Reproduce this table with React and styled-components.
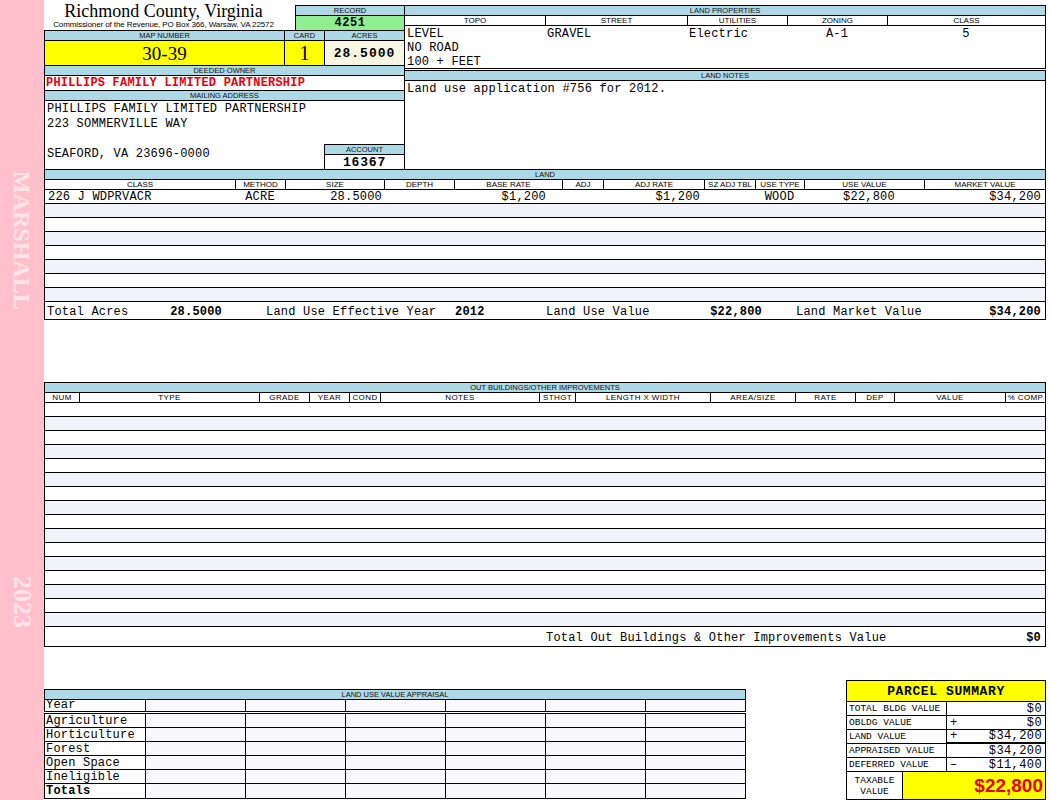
import React from "react";
import styled, { createGlobalStyle } from "styled-components";

const MONO = `"Liberation Mono", "DejaVu Sans Mono", monospace`;
const SANS = `"Liberation Sans", Arial, sans-serif`;
const SERIF = `"Liberation Serif", "Times New Roman", serif`;

const LAND_COLS = "190px 50px 99px 70px 108px 41px 101px 51px 49px 120px 1fr";
const OB_COLS = "34px 180px 50px 40px 31px 159px 36px 135px 85px 60px 39px 111px 1fr";
const PROP_COLS = "140px 142px 100px 100px 1fr";
const LUV_COLS = "100px repeat(6, 1fr)";

const GlobalStyle = createGlobalStyle`
    html, body {
        margin: 0;
        padding: 0;
        background: #fff;
    }
    body {
        width: 1050px;
        height: 800px;
        overflow: hidden;
    }
    * {
        box-sizing: border-box;
    }
`;

const Page = styled.div`
    display: flex;
    width: 1050px;
    height: 800px;
    overflow: hidden;
`;

const Strip = styled.aside`
    width: 44px;
    flex: none;
    background: #ffc0cb;
    display: flex;
    flex-direction: column;
    align-items: center;
    justify-content: space-between;
    padding: 171px 0 172px;
`;

const StripText = styled.div`
    writing-mode: vertical-rl;
    font-family: ${SERIF};
    font-weight: bold;
    font-size: ${p => p.$size}px;
    line-height: 1;
    color: rgba(255, 255, 255, 0.6);
`;

const Main = styled.main`
    width: 1002px;
    flex: none;
    display: flex;
    flex-direction: column;
`;

const Head = styled.div`
    display: flex;
    height: 171px;
`;

const LeftHead = styled.div`
    width: 361px;
    flex: none;
    display: flex;
    flex-direction: column;
`;

const RightHead = styled.div`
    flex: 1;
    margin-left: -1px;
    display: flex;
    flex-direction: column;
`;

const TitleRow = styled.div`
    display: flex;
    height: 31px;
`;

const TitleBlock = styled.div`
    flex: 1;
    text-align: center;
    padding: 2px 12px 0 0;
`;

const Title = styled.div`
    font-family: ${SERIF};
    font-size: 18px;
    line-height: 18px;
`;

const Subtitle = styled.div`
    font-family: ${SANS};
    font-size: 8px;
    line-height: 9px;
    letter-spacing: -0.1px;
`;

const Field = styled.div`
    border: 1px solid #000;
    background: #fff;
    display: flex;
    flex-direction: column;
    width: ${p => (p.$w ? `${p.$w}px` : "auto")};
    flex: ${p => (p.$fill ? 1 : "none")};
    margin-left: ${p => (p.$joined ? "-1px" : 0)};
    margin-top: ${p => p.$top || 0}px;
`;

const Cap = styled.div`
    height: 10px;
    line-height: 9px;
    background: #add8e6;
    border-bottom: 1px solid #000;
    font-family: ${SANS};
    font-size: 7.5px;
    text-align: center;
    text-transform: uppercase;
    color: #111;
    white-space: nowrap;
`;

const RecordValue = styled.div`
    height: 14px;
    line-height: 14px;
    background: #90ee90;
    font-family: ${MONO};
    font-weight: bold;
    font-size: 12px;
    letter-spacing: 0.5px;
    text-align: center;
`;

const MapRow = styled.div`
    display: flex;
    margin-top: -1px;
`;

const BigValue = styled.div`
    height: 24px;
    line-height: 25px;
    background: ${p => p.$bg};
    font-family: ${p => (p.$mono ? MONO : SERIF)};
    font-weight: ${p => (p.$mono ? "bold" : "normal")};
    font-size: ${p => p.$size}px;
    letter-spacing: ${p => (p.$mono ? "1px" : "0")};
    text-align: center;
`;

const OwnerValue = styled.div`
    height: 14px;
    line-height: 15px;
    padding-left: 1px;
    font-family: ${MONO};
    font-weight: bold;
    font-size: 12px;
    letter-spacing: 0.2px;
    color: #e8000b;
    white-space: nowrap;
`;

const MailBody = styled.div`
    flex: 1;
    display: flex;
    align-items: flex-end;
`;

const Address = styled.div`
    flex: 1;
    align-self: stretch;
    padding: 1px 2px;
    font-family: ${MONO};
    font-size: 12px;
    line-height: 15px;
    letter-spacing: 0.2px;
    white-space: pre;
`;

const AccountField = styled(Field)`
    margin: 0 -1px -1px 0;
`;

const AccountValue = styled.div`
    height: 14px;
    line-height: 15px;
    font-family: ${MONO};
    font-weight: bold;
    font-size: 13px;
    letter-spacing: 0.8px;
    text-align: center;
`;

const Row = styled.div`
    display: grid;
    grid-template-columns: ${p => p.$cols};
    height: ${p => p.$h || 14}px;
    border-bottom: ${p => (p.$last ? "0" : "1px solid #000")};
    background: ${p => (p.$alt ? "#f2f2fa" : "#fff")};
`;

const HeadCell = styled.div`
    font-family: ${SANS};
    font-size: 8px;
    line-height: 9px;
    letter-spacing: ${p => p.$spread || 0}px;
    text-align: center;
    text-transform: uppercase;
    white-space: nowrap;
    overflow: hidden;
    border-left: 1px solid #000;

    &:first-child {
        border-left: 0;
    }
`;

const Cell = styled.div`
    font-family: ${MONO};
    font-size: 12px;
    line-height: 13px;
    letter-spacing: 0.2px;
    white-space: pre;
    overflow: hidden;
    text-align: ${p => p.$align || "left"};
    padding: 1px ${p => p.$pr ?? 2}px 0 ${p => p.$pl ?? 2}px;
    font-weight: ${p => (p.$bold ? "bold" : "normal")};
`;

const PropValues = styled.div`
    display: grid;
    grid-template-columns: ${PROP_COLS};
    height: 42px;
    font-family: ${MONO};
    font-size: 12px;
    line-height: 14px;
    letter-spacing: 0.2px;
`;

const PropCol = styled.div`
    padding: 1px 0 0 ${p => (p.$center ? 0 : 2)}px;
    text-align: ${p => (p.$center ? "center" : "left")};
    white-space: pre;
`;

const NoteBody = styled.div`
    flex: 1;
    padding: 1px 2px 0;
    font-family: ${MONO};
    font-size: 12px;
    line-height: 14px;
    letter-spacing: 0.2px;
`;

const TotalRow = styled.div`
    display: grid;
    grid-template-columns: ${p => p.$cols};
    height: ${p => p.$h}px;
    line-height: ${p => p.$h}px;
    padding-top: 2px;
    background: #fff;
    font-family: ${MONO};
    font-size: 12px;
    letter-spacing: 0.2px;
    white-space: pre;
`;

const TotalText = styled.span`
    text-align: ${p => p.$align || "left"};
    padding: 0 ${p => p.$pr || 0}px 0 ${p => p.$pl || 0}px;
    font-weight: ${p => (p.$bold ? "bold" : "normal")};
`;

const Bottom = styled.div`
    display: flex;
    justify-content: space-between;
    align-items: flex-start;
    margin-top: 33px;
`;

const Luv = styled.div`
    width: 702px;
    margin-top: 9px;
    display: flex;
    flex-direction: column;
`;

const LuvCap = styled(Cap)`
    height: 11px;
    border: 1px solid #000;
`;

const LuvTable = styled.div`
    border: 1px solid #000;
    margin-top: ${p => p.$gap}px;
`;

const LuvCell = styled.div`
    border-left: 1px solid #000;
    background: #f8f8fd;
    font-family: ${MONO};
    font-size: 12px;
    line-height: ${p => p.$lh || 13}px;
    padding-top: ${p => (p.$lh ? 0 : 1)}px;
    letter-spacing: 0.2px;
    font-weight: ${p => (p.$bold ? "bold" : "normal")};
    padding-left: 1px;
    white-space: nowrap;
    overflow: ${p => (p.$lh ? "visible" : "hidden")};

    &:first-child {
        border-left: 0;
        background: #fff;
    }
`;

const Summary = styled(Field)`
    width: 200px;
`;

const SummaryHead = styled.div`
    height: 21px;
    line-height: 21px;
    background: #ffff00;
    border-bottom: 1px solid #000;
    font-family: ${MONO};
    font-weight: bold;
    font-size: 13px;
    letter-spacing: 0.6px;
    text-align: center;
`;

const SumRow = styled.div`
    display: grid;
    grid-template-columns: ${p => p.$cols || "100px 1fr"};
    height: ${p => p.$h || 14}px;
    border-bottom: ${p => (p.$last ? "0" : "1px solid #000")};
`;

const SumLabel = styled.div`
    border-right: 1px solid #000;
    font-family: ${MONO};
    font-size: 9.5px;
    line-height: ${p => p.$lh || 14}px;
    padding: ${p => (p.$center ? "3px 0 0" : "0 0 0 2px")};
    text-align: ${p => (p.$center ? "center" : "left")};
    white-space: pre;
`;

const SumValue = styled.div`
    display: flex;
    justify-content: space-between;
    padding: 0 3px;
    font-family: ${MONO};
    font-size: 12px;
    line-height: ${p => (p.$thick ? 12 : 14)}px;
    letter-spacing: 0.4px;
    box-shadow: ${p => (p.$thick ? "inset 0 -2px 0 #000" : "none")};
`;

const TaxValue = styled.div`
    background: #ffff00;
    color: #e8000b;
    font-family: ${SANS};
    font-weight: bold;
    font-size: 19px;
    line-height: 27px;
    text-align: right;
    padding-right: 2px;
`;

const landHeads = ["Class", "Method", "Size", "Depth", "Base Rate", "Adj", "Adj Rate", "SZ Adj Tbl", "Use Type", "Use Value", "Market Value"];
const obHeads = ["Num", "Type", "Grade", "Year", "Cond", "Notes", "Sthgt", "Length X Width", "Area/Size", "Rate", "Dep", "Value", "% Comp"];
const luvLabels = ["Agriculture", "Horticulture", "Forest", "Open Space", "Ineligible", "Totals"];

const summaryRows = [
    { label: "TOTAL BLDG VALUE", sign: "", value: "$0" },
    { label: "OBLDG VALUE", sign: "+", value: "$0" },
    { label: "LAND VALUE", sign: "+", value: "$34,200", thick: true },
    { label: "APPRAISED VALUE", sign: "", value: "$34,200" },
    { label: "DEFERRED VALUE", sign: "\u2013", value: "$11,400" }
];

function LandSection() {
    return (
        <Field $top={-1}>
            <Cap>Land</Cap>
            <Row $cols={LAND_COLS} $h={10}>
                {landHeads.map(h => <HeadCell key={h}>{h}</HeadCell>)}
            </Row>
            <Row $cols={LAND_COLS}>
                <Cell $pl={3}>{"226 J WDPRVACR"}</Cell>
                <Cell $align="center">ACRE</Cell>
                <Cell $align="right">28.5000</Cell>
                <Cell />
                <Cell $align="right" $pr={16}>$1,200</Cell>
                <Cell />
                <Cell $align="right" $pr={4}>$1,200</Cell>
                <Cell />
                <Cell $align="center">WOOD</Cell>
                <Cell $align="center" $pl={12}>$22,800</Cell>
                <Cell $align="right" $pr={4}>$34,200</Cell>
            </Row>
            {Array.from({ length: 7 }, (_, i) => (
                <Row key={i} $cols={LAND_COLS} $alt={i % 2 === 0} />
            ))}
            <TotalRow $cols="117px 60px 230px 48px 200px 64px 196px 1fr" $h={17}>
                <TotalText $pl={2}>Total Acres</TotalText>
                <TotalText $align="right" $bold>28.5000</TotalText>
                <TotalText $pl={44}>Land Use Effective Year</TotalText>
                <TotalText $pl={3} $bold>2012</TotalText>
                <TotalText $pl={46}>Land Use Value</TotalText>
                <TotalText $align="right" $pr={2} $bold>$22,800</TotalText>
                <TotalText $pl={32}>Land Market Value</TotalText>
                <TotalText $align="right" $pr={4} $bold>$34,200</TotalText>
            </TotalRow>
        </Field>
    );
}

function OutBuildings() {
    return (
        <Field $top={62}>
            <Cap>Out Buildings/Other Improvements</Cap>
            <Row $cols={OB_COLS} $h={10}>
                {obHeads.map(h => <HeadCell key={h} $spread={0.4}>{h}</HeadCell>)}
            </Row>
            {Array.from({ length: 16 }, (_, i) => (
                <Row key={i} $cols={OB_COLS} $alt={i % 2 === 1} />
            ))}
            <TotalRow $cols="1fr auto" $h={19}>
                <TotalText $pl={501}>Total Out Buildings &amp; Other Improvements Value</TotalText>
                <TotalText $pr={4} $bold>$0</TotalText>
            </TotalRow>
        </Field>
    );
}

function LandUseAppraisal() {
    return (
        <Luv>
            <LuvCap>Land Use Value Appraisal</LuvCap>
            <LuvTable $gap={-1}>
                <Row $cols={LUV_COLS} $h={11} $last>
                    <LuvCell $lh={11}>Year</LuvCell>
                    {Array.from({ length: 6 }, (_, i) => <LuvCell key={i} $lh={11} />)}
                </Row>
            </LuvTable>
            <LuvTable $gap={1}>
                {luvLabels.map((label, r) => (
                    <Row key={label} $cols={LUV_COLS} $last={r === luvLabels.length - 1}>
                        <LuvCell $bold={label === "Totals"}>{label}</LuvCell>
                        {Array.from({ length: 6 }, (_, i) => <LuvCell key={i} />)}
                    </Row>
                ))}
            </LuvTable>
        </Luv>
    );
}

function ParcelSummary() {
    return (
        <Summary>
            <SummaryHead>PARCEL SUMMARY</SummaryHead>
            {summaryRows.map(r => (
                <SumRow key={r.label}>
                    <SumLabel>{r.label}</SumLabel>
                    <SumValue $thick={r.thick}>
                        <span>{r.sign}</span>
                        <span>{r.value}</span>
                    </SumValue>
                </SumRow>
            ))}
            <SumRow $cols="56px 1fr" $h={27} $last>
                <SumLabel $center $lh={11}>{"TAXABLE\nVALUE"}</SumLabel>
                <TaxValue>$22,800</TaxValue>
            </SumRow>
        </Summary>
    );
}

export default function App() {
    return (
        <Page>
            <GlobalStyle />
            <Strip>
                <StripText $size={24}>MARSHALL</StripText>
                <StripText $size={26}>2023</StripText>
            </Strip>
            <Main>
                <Head>
                    <LeftHead>
                        <TitleRow>
                            <TitleBlock>
                                <Title>Richmond County, Virginia</Title>
                                <Subtitle>Commissioner of the Revenue, PO Box 366, Warsaw, VA 22572</Subtitle>
                            </TitleBlock>
                            <Field $w={110} $top={5}>
                                <Cap>Record</Cap>
                                <RecordValue>4251</RecordValue>
                            </Field>
                        </TitleRow>
                        <MapRow>
                            <Field $fill>
                                <Cap>Map Number</Cap>
                                <BigValue $bg="#ffff00" $size={19}>30-39</BigValue>
                            </Field>
                            <Field $w={41} $joined>
                                <Cap>Card</Cap>
                                <BigValue $bg="#ffff00" $size={21}>1</BigValue>
                            </Field>
                            <Field $w={81} $joined>
                                <Cap>Acres</Cap>
                                <BigValue $bg="#f7f5e4" $size={13} $mono>28.5000</BigValue>
                            </Field>
                        </MapRow>
                        <Field $top={-1}>
                            <Cap>Deeded Owner</Cap>
                            <OwnerValue>PHILLIPS FAMILY LIMITED PARTNERSHIP</OwnerValue>
                        </Field>
                        <Field $top={-1} $fill>
                            <Cap>Mailing Address</Cap>
                            <MailBody>
                                <Address>{"PHILLIPS FAMILY LIMITED PARTNERSHIP\n223 SOMMERVILLE WAY\n\nSEAFORD, VA 23696-0000"}</Address>
                                <AccountField $w={81}>
                                    <Cap>Account</Cap>
                                    <AccountValue>16367</AccountValue>
                                </AccountField>
                            </MailBody>
                        </Field>
                    </LeftHead>
                    <RightHead>
                        <Field $top={5}>
                            <Cap>Land Properties</Cap>
                            <Row $cols={PROP_COLS} $h={10}>
                                {["Topo", "Street", "Utilities", "Zoning", "Class"].map(h => (
                                    <HeadCell key={h}>{h}</HeadCell>
                                ))}
                            </Row>
                            <PropValues>
                                <PropCol>{"LEVEL\nNO ROAD\n100 + FEET"}</PropCol>
                                <PropCol>GRAVEL</PropCol>
                                <PropCol>Electric</PropCol>
                                <PropCol $center>A-1</PropCol>
                                <PropCol $center>5</PropCol>
                            </PropValues>
                        </Field>
                        <Field $top={1} $fill>
                            <Cap>Land Notes</Cap>
                            <NoteBody>Land use application #756 for 2012.</NoteBody>
                        </Field>
                    </RightHead>
                </Head>
                <LandSection />
                <OutBuildings />
                <Bottom>
                    <LandUseAppraisal />
                    <ParcelSummary />
                </Bottom>
            </Main>
        </Page>
    );
}
